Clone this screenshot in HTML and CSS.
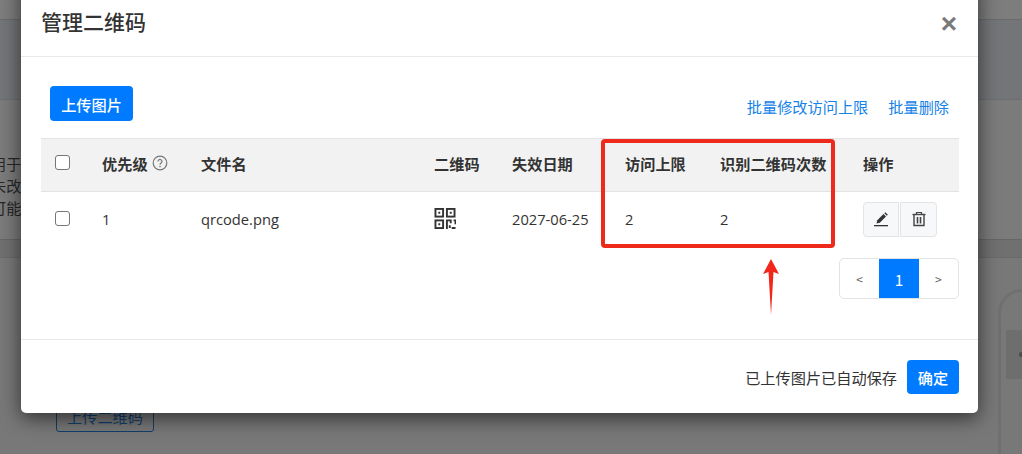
FILE: index.html
```html
<!DOCTYPE html>
<html lang="zh-CN">
<head>
<meta charset="utf-8">
<title>管理二维码</title>
<link rel="stylesheet" href="styles.css">
</head>
<body>
<div class="backdrop">
  <div class="band band-a"></div>
  <div class="band band-b"></div>
  <div class="band band-c"><div class="bg-text">用于<br>未改<br>可能</div></div>
  <div class="band band-d"></div>
  <div class="band band-e">
    <button class="bg-upload">上传二维码</button>
    <div class="bg-right"><div class="bg-block"><span class="bg-dot"></span></div></div>
  </div>
</div>
<main class="modal">
  <header class="modal-head">
    <h1>管理二维码</h1>
    <span class="close">×</span>
  </header>
  <section class="modal-body">
    <div class="toolbar">
      <button class="primary upload">上传图片</button>
      <div class="links"><a>批量修改访问上限</a><a>批量删除</a></div>
    </div>
    <div class="table">
      <div class="row head">
        <div class="c c-check"><span class="box"></span></div>
        <div class="c c-pri">优先级 <svg class="help" viewBox="0 0 16 16"><circle cx="8" cy="8" r="6.8" fill="none" stroke="#777" stroke-width="1.2"/><path d="M6 6.4a2 2 0 1 1 3.1 1.7c-.7.5-1.1.8-1.1 1.7" fill="none" stroke="#777" stroke-width="1.2"/><circle cx="8" cy="11.6" r=".8" fill="#777"/></svg></div>
        <div class="c c-name">文件名</div>
        <div class="c c-qr">二维码</div>
        <div class="c c-date">失效日期</div>
        <div class="c c-limit">访问上限</div>
        <div class="c c-count">识别二维码次数</div>
        <div class="c c-act">操作</div>
      </div>
      <div class="row body">
        <div class="c c-check"><span class="box"></span></div>
        <div class="c c-pri">1</div>
        <div class="c c-name">qrcode.png</div>
        <div class="c c-qr">
          <svg class="qr" viewBox="0 0 22 22" fill="none" stroke="#333" stroke-width="2">
            <rect x="1" y="1" width="8" height="8"/><rect x="13" y="1" width="8" height="8"/><rect x="1" y="13" width="8" height="8"/>
            <path d="M4 4h2v2H4zM16 4h2v2h-2zM4 16h2v2H4z" fill="#333" stroke="none"/>
            <path d="M13 22v-9h4v3M20 13h2v4M16 18v3M19 20v2M21 20v2"/>
          </svg>
        </div>
        <div class="c c-date">2027-06-25</div>
        <div class="c c-limit">2</div>
        <div class="c c-count">2</div>
        <div class="c c-act">
          <button class="icon-btn"><svg viewBox="0 0 16 16"><path d="M1 14h14v1.300H1z" fill="#333"/><path d="M3.500 12.500l.8-3.300L10.500 3l2.500 2.500-6.200 6.200z" fill="#333"/><path d="M11.300 2.200l1-1 2.500 2.500-1 1z" fill="#333"/></svg></button>
          <button class="icon-btn"><svg viewBox="0 0 16 16" fill="none" stroke="#444"><path d="M1.500 3.500h13" stroke-width="1.400"/><path d="M5.500 3V1.500h5V3" stroke-width="1.200"/><path d="M3 4v10.500h10V4" stroke-width="1.400"/><path d="M6.500 6v6.500M9.500 6v6.500" stroke-width="1.600"/></svg></button>
        </div>
      </div>
    </div>
    <nav class="pager"><span>&lt;</span><span class="on">1</span><span>&gt;</span></nav>
  </section>
  <footer class="modal-foot">
    <span>已上传图片已自动保存</span>
    <button class="primary ok">确定</button>
  </footer>
</main>
<div class="mark-box"></div>
<svg class="mark-arrow" viewBox="0 0 16 56"><path d="M8 0L16 15 10.500 13 8 56 5.500 13 0 15z" fill="#f1271c"/></svg>
</body>
</html>
```
FILE: styles.css
```css
* { box-sizing: border-box; }
html, body { margin: 0; height: 100%; }
body {
  width: 1022px; height: 454px; overflow: hidden; position: relative;
  background: #7c7c7c;
  font-family: "Noto Sans CJK SC", "Liberation Sans", sans-serif;
  font-size: 15.2px; color: #333;
}
button { font-family: inherit; }
.backdrop { display: flex; flex-direction: column; height: 454px; overflow: hidden; }
.band { flex: none; }
.band-a { height: 20px; background: #7d7d7d; border-bottom: 1px solid #6b6b6b; }
.band-b { height: 80px; background: #737578; border-bottom: 1px solid #6c6e70; }
.band-c { height: 140px; background: #7b7b7b; border-bottom: 1px solid #666; }
.band-d { height: 18px; background: #707070; border-bottom: 1px solid #6a6a6a; }
.band-e { flex: 1; background: #787878; display: flex; justify-content: space-between; align-items: flex-start; }
.bg-text { margin: 52px 0 0 -9px; font-size: 15.2px; line-height: 22px; color: #262626; }
.bg-upload {
  margin: 141px 0 0 56px; width: 98px; height: 33px;
  background: transparent; border: 1px solid #123f6d; border-radius: 3px;
  color: #123f6d; font-size: 15.2px; padding: 0;
}
.bg-right {
  margin-top: 31px; width: 24px; height: 170px;
  border-left: 3px solid #707070; border-top: 3px solid #707070; border-radius: 30px 0 0 0;
  padding: 38px 0 0 5px;
}
.bg-block { height: 49px; background: #6e6e6e; display: flex; justify-content: flex-end; align-items: center; }
.bg-dot { width: 3px; height: 5px; background: #4d4d4d; border-radius: 2px 0 0 2px; }
.modal {
  position: absolute; left: 21px; top: -24px; width: 957px; height: 437px;
  background: #fff; border-radius: 5px;
  box-shadow: 0 5px 20px rgba(0,0,0,.6);
  display: flex; flex-direction: column;
}
.modal-head {
  height: 81px; padding: 24px 21px 14px 20px; border-bottom: 1px solid #e9e9e9;
  display: flex; justify-content: space-between; align-items: center;
}
.modal-head h1 { margin: 0; font-size: 21px; font-weight: 500; color: #333; line-height: 32px; }
.close { font-family: "Liberation Sans", sans-serif; font-size: 28px; font-weight: 700; color: #7a7a7a; line-height: 28px; margin-top: 6px; }
.modal-body { flex: 1; padding: 29px 20px 0 20px; position: relative; }
.toolbar { display: flex; justify-content: space-between; align-items: flex-start; height: 52px; }
.primary { background: #007bff; color: #fff; border: 0; border-radius: 4px; font-size: 15.2px; font-weight: 500; padding: 0; }
.upload { width: 83px; height: 35px; margin-left: 9px; }
.links { display: flex; gap: 20px; padding-top: 9px; margin-right: 9px; color: #1482e8; line-height: 22px; }
.table { width: 918px; }
.row { display: flex; align-items: center; line-height: 20px; }
.row.head { height: 54px; background: #f2f2f2; border-top: 1px solid #e3e3e3; border-bottom: 1px solid #e3e3e3; font-weight: 700; }
.row.head .c { margin-top: -4px; }
.row.body { height: 57px; font-family: "Open Sans", "Noto Sans CJK SC", sans-serif; font-size: 14.7px; }
.row.body .c { margin-top: -3px; }
.c { flex: none; }
.box { display: block; width: 15px; height: 15px; border: 1px solid #767676; border-radius: 3px; background: #fff; margin-left: 14px; margin-top: -2px; }
.c-check { width: 61px; }
.c-pri { width: 99px; display: flex; align-items: center; gap: 4px; }
.c-name { width: 233px; }
.c-qr { width: 78px; }
.c-date { width: 113px; }
.c-limit { width: 95px; }
.c-count { width: 143px; }
.c-act { display: flex; gap: 1px; }
.help { width: 16px; height: 16px; }
.qr { display: block; width: 22px; height: 21px; margin-top: -2px; }
.icon-btn {
  width: 36px; height: 35px; padding: 0; background: #f6f8fa;
  border: 1px solid #e2e4e6; border-radius: 4px 0 0 4px;
  display: flex; align-items: center; justify-content: center;
}
.icon-btn + .icon-btn { width: 37px; border-radius: 0 4px 4px 0; }
.icon-btn svg { width: 16px; height: 16px; }
.pager {
  position: absolute; right: 19px; top: 201px; display: flex; width: 120px; height: 41px;
  border: 1px solid #e3e3e3; border-radius: 5px; overflow: hidden;
}
.pager span { flex: 1; display: flex; align-items: center; justify-content: center; color: #666; font-size: 12px; }
.pager .on { background: #007bff; color: #fff; font-size: 15.2px; }
.modal-foot {
  height: 74px; border-top: 1px solid #e9e9e9; padding: 0 19px 0 0;
  display: flex; align-items: center; justify-content: flex-end; gap: 10px;
}
.ok { width: 52px; height: 34px; }
.mark-box {
  position: absolute; left: 601px; top: 139px; width: 234px; height: 109px;
  border: 4px solid #ee2a1c; border-radius: 4px;
}
.mark-arrow { position: absolute; left: 763px; top: 259px; width: 16px; height: 56px; }
```
